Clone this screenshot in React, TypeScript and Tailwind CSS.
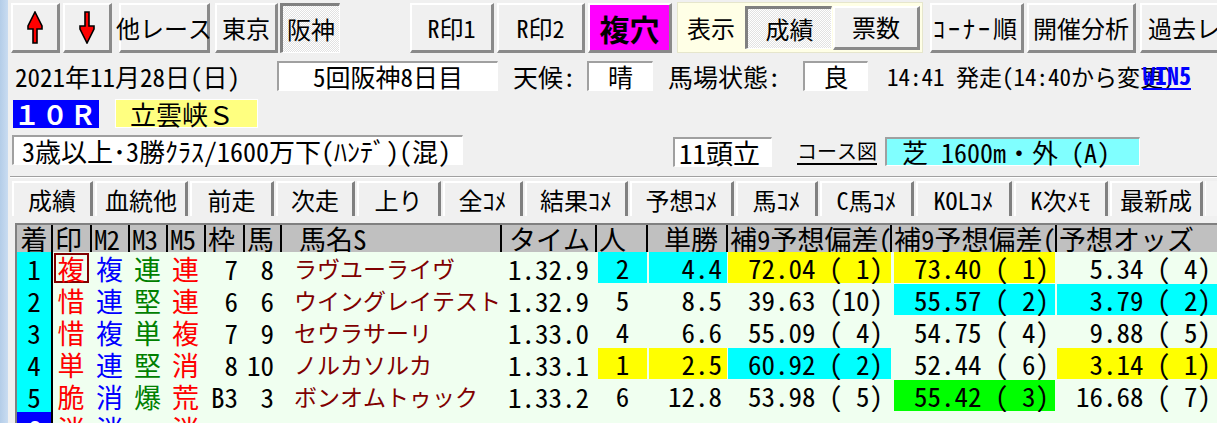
import React from 'react';

type Tone = 'cy' | 'ye' | 'gr' | undefined;

type Row = {
  rank: string;
  marks: [string, string, string, string];
  waku: string;
  uma: string;
  name: string;
  time: string;
  pop: string;
  win: string;
  a: string;
  b: string;
  odds: string;
  tones: { pop?: Tone; win?: Tone; a?: Tone; b?: Tone; odds?: Tone };
};

const rows: Row[] = [
  { rank: '1', marks: ['複', '複', '連', '連'], waku: '7', uma: '8', name: 'ラヴユーライヴ', time: '1.32.9', pop: '2', win: '4.4', a: '72.04 ( 1)', b: '73.40 ( 1)', odds: '5.34 ( 4)', tones: { pop: 'cy', win: 'cy', a: 'ye', b: 'ye' } },
  { rank: '2', marks: ['惜', '連', '堅', '連'], waku: '6', uma: '6', name: 'ウイングレイテスト', time: '1.32.9', pop: '5', win: '8.5', a: '39.63 (10)', b: '55.57 ( 2)', odds: '3.79 ( 2)', tones: { b: 'cy', odds: 'cy' } },
  { rank: '3', marks: ['惜', '複', '単', '複'], waku: '7', uma: '9', name: 'セウラサーリ', time: '1.33.0', pop: '4', win: '6.6', a: '55.09 ( 4)', b: '54.75 ( 4)', odds: '9.88 ( 5)', tones: {} },
  { rank: '4', marks: ['単', '連', '堅', '消'], waku: '8', uma: '10', name: 'ノルカソルカ', time: '1.33.1', pop: '1', win: '2.5', a: '60.92 ( 2)', b: '52.44 ( 6)', odds: '3.14 ( 1)', tones: { pop: 'ye', win: 'ye', a: 'cy', odds: 'ye' } },
  { rank: '5', marks: ['脆', '消', '爆', '荒'], waku: 'B3', uma: '3', name: 'ボンオムトゥック', time: '1.33.2', pop: '6', win: '12.8', a: '53.98 ( 5)', b: '55.42 ( 3)', odds: '16.68 ( 7)', tones: { b: 'gr' } },
  { rank: '6', marks: ['消', '消', '', '消'], waku: '', uma: '', name: '', time: '', pop: '', win: '', a: '', b: '', odds: '', tones: {} },
];

const toneBg = (t: Tone) =>
  t === 'cy' ? 'bg-[#00ffff]' : t === 'ye' ? 'bg-[#ffff00]' : t === 'gr' ? 'bg-[#00ff00]' : '';

const GRID =
  'grid grid-cols-[36px_39px_38px_38px_38px_39px_37px_220px_95px_51px_80px_164px_165px_170px]';

const markColors = ['text-[#ff0000]', 'text-[#0000ff]', 'text-[#008000]', 'text-[#ff0000]'];

function Btn({
  className = '',
  pressed = false,
  children,
}: {
  className?: string;
  pressed?: boolean;
  children: React.ReactNode;
}) {
  const face = pressed
    ? 'border-t-[3px] border-l-[3px] border-t-[#808080] border-l-[#808080] border-b border-r border-b-white border-r-white bg-[repeating-conic-gradient(#ffffff_0_25%,#e2e2e2_0_50%)] bg-[length:2px_2px]'
    : 'border-t-2 border-l-2 border-t-white border-l-white border-b-[3px] border-r-[3px] border-b-[#8a8a8a] border-r-[#8a8a8a] bg-[#f0f0f0]';
  return (
    <div className={`flex shrink-0 items-center justify-center text-[24px] leading-none ${face} ${className}`}>
      {children}
    </div>
  );
}

function Inset({ className = '', children }: { className?: string; children: React.ReactNode }) {
  return (
    <div
      className={`flex shrink-0 items-center border-t-2 border-l-2 border-[#a0a0a0] border-b border-r border-b-white border-r-white bg-white leading-none ${className}`}
    >
      {children}
    </div>
  );
}

function UpArrow() {
  return (
    <svg width="20" height="33" viewBox="0 0 20 33">
      <path d="M10 1 L17 15 L17 18 L12 18 L12 32 L8 32 L8 18 L3 18 L3 15 Z" fill="#ff0000" stroke="#000" strokeWidth="1.6" strokeLinejoin="miter" />
    </svg>
  );
}

function DownArrow() {
  return (
    <svg width="20" height="33" viewBox="0 0 20 33">
      <path d="M8 1 L12 1 L12 15 L17 15 L17 18 L10 32 L3 18 L3 15 L8 15 Z" fill="#ff0000" stroke="#000" strokeWidth="1.6" strokeLinejoin="miter" />
    </svg>
  );
}

function Tab({ className = '', children }: { className?: string; children: React.ReactNode }) {
  return (
    <div
      className={`flex h-[35px] shrink-0 items-center justify-center border-t-2 border-l-2 border-white border-r-[3px] border-r-[#808080] bg-[#f0f0f0] text-[24px] leading-none ${className}`}
    >
      {children}
    </div>
  );
}

export default function App() {
  return (
    <div className="flex h-[423px] w-[1217px] overflow-hidden bg-[#f0f0f0] text-black [font-family:'Noto_Sans_Mono_CJK_JP','Noto_Sans_CJK_JP',sans-serif] [font-feature-settings:'hwid']">
      {/* window frame edge */}
      <div className="w-[8px] shrink-0 bg-gradient-to-r from-[#b4cde8] to-[#c9dcf1]" />

      <div className="flex min-w-0 flex-1 flex-col">
        {/* toolbar */}
        <div className="mt-[3px] flex h-[50px] items-stretch whitespace-nowrap">
          <Btn className="ml-[3px] w-[49px]"><UpArrow /></Btn>
          <Btn className="ml-[3px] w-[49px]"><DownArrow /></Btn>
          <Btn className="ml-[7px] w-[91px]">他レース</Btn>
          <Btn className="ml-[5px] w-[63px]">東京</Btn>
          <Btn className="ml-[2px] w-[60px]" pressed>阪神</Btn>

          <Btn className="ml-[70px] w-[84px]">R印1</Btn>
          <Btn className="ml-[3px] w-[88px]">R印2</Btn>
          <Btn className="ml-[3px] w-[84px] !bg-[#ff00ff] text-[30px] font-bold">複穴</Btn>

          <div className="-mt-px ml-[5px] flex h-[51px] w-[246px] shrink-0 items-center border border-[#e6e6cc] bg-[#ffffe6]">
            <span className="w-[67px] pl-[9px] text-[24px] leading-none">表示</span>
            <Btn className="h-[43px] w-[87px]" pressed>成績</Btn>
            <Btn className="ml-px h-[44px] w-[87px]">票数</Btn>
          </div>

          <Btn className="ml-[7px] w-[94px] tracking-[3px]">ｺｰﾅｰ順</Btn>
          <Btn className="ml-[3px] w-[109px]">開催分析</Btn>
          <Btn className="ml-[4px] w-[100px] justify-start pl-[6px]">過去レース</Btn>
        </div>

        {/* date / venue / weather */}
        <div className="relative mt-[8px] flex h-[30px] items-center whitespace-nowrap">
          <span className="ml-[7px] w-[262px] text-[25px] leading-none">2021年11月28日(日)</span>
          <Inset className="h-[30px] w-[221px] justify-center text-[25px]">5回阪神8日目</Inset>
          <span className="w-[89px] pl-[15px] text-[25px] leading-none">天候:</span>
          <Inset className="h-[30px] w-[66px] justify-center text-[25px]">晴</Inset>
          <span className="w-[150px] pl-[15px] text-[25px] leading-none">馬場状態:</span>
          <Inset className="h-[30px] w-[65px] justify-center text-[25px]">良</Inset>
          <span className="pl-[19px] text-[23px] leading-none">14:41 発走(14:40から変更)</span>
          <span className="absolute left-[1135px] top-[2px] text-[24px] font-bold leading-none text-[#0000ff] underline underline-offset-[3px]">
            WIN5
          </span>
        </div>

        {/* race number / race name */}
        <div className="mt-[8px] flex h-[29px] items-center whitespace-nowrap">
          <div className="ml-[5px] flex h-[28px] w-[86px] items-center justify-center bg-[#0000ff] text-[26px] font-bold leading-none tracking-[2px] text-white [font-feature-settings:normal]">
            １０Ｒ
          </div>
          <div className="ml-[16px] flex h-[29px] w-[143px] items-center border border-white bg-[#ffff80] pl-[14px] text-[26px] leading-none [font-feature-settings:normal]">
            立雲峡Ｓ
          </div>
        </div>

        {/* conditions / runners / course */}
        <div className="mt-[7px] flex h-[32px] items-start whitespace-nowrap">
          <Inset className="ml-[4px] h-[30px] w-[451px] pl-[8px] text-[26px]">3歳以上･3勝ｸﾗｽ/1600万下(ﾊﾝﾃﾞ)(混)</Inset>
          <Inset className="ml-[210px] mt-[2px] h-[30px] w-[99px] pl-[4px] text-[27px]">11頭立</Inset>
          <span className="ml-[25px] mt-[6px] text-[20px] leading-none underline underline-offset-[4px] decoration-2">
            コース図
          </span>
          <div className="ml-[8px] mt-[2px] flex h-[29px] w-[255px] items-center border-t-2 border-l-2 border-[#a0a0a0] border-b border-r border-b-white border-r-white bg-[#80ffff] pl-[15px] text-[26px] leading-none">
            芝 1600m・外 (A)
          </div>
        </div>

        <div className="ml-[2px] mt-[9px] h-[2px] border-t border-b border-t-[#a0a0a0] border-b-white" />

        {/* view tabs */}
        <div className="mt-[3px] flex h-[35px] items-stretch gap-[2px] whitespace-nowrap pl-[4px]">
          <Tab className="w-[81px]">成績</Tab>
          <Tab className="w-[93px]">血統他</Tab>
          <Tab className="w-[84px]">前走</Tab>
          <Tab className="w-[79px]">次走</Tab>
          <Tab className="w-[84px]">上り</Tab>
          <Tab className="w-[80px]">全ｺﾒ</Tab>
          <Tab className="w-[103px]">結果ｺﾒ</Tab>
          <Tab className="w-[104px]">予想ｺﾒ</Tab>
          <Tab className="w-[82px]">馬ｺﾒ</Tab>
          <Tab className="w-[94px]">C馬ｺﾒ</Tab>
          <Tab className="w-[96px]">KOLｺﾒ</Tab>
          <Tab className="w-[94px]">K次ﾒﾓ</Tab>
          <Tab className="w-[93px]">最新成</Tab>
          <div className="flex-1 border-l border-white bg-[#f4f4f4]" />
        </div>

        {/* results grid */}
        <div className="ml-[7px] mt-[7px] flex flex-col overflow-hidden border-t-2 border-l-2 border-[#808080] whitespace-nowrap">
          <div className={`${GRID} h-[33px] bg-[#c0c0c0] text-[27px] leading-none`}>
            <div className="flex items-center justify-center border-r-2 border-black">着</div>
            <div className="flex items-center border-r-2 border-black pl-[2px]">印</div>
            <div className="flex items-center border-r-2 border-black pl-[2px] tracking-[-1px]">M2</div>
            <div className="flex items-center border-r-2 border-black pl-[2px] tracking-[-1px]">M3</div>
            <div className="flex items-center border-r-2 border-black pl-[2px] tracking-[-1px]">M5</div>
            <div className="flex items-center border-r-2 border-black pl-[2px]">枠</div>
            <div className="flex items-center border-r-2 border-black pl-[2px]">馬</div>
            <div className="flex items-center border-r-2 border-black pl-[17px]">馬名S</div>
            <div className="flex items-center border-r-2 border-black pl-[7px]">タイム</div>
            <div className="flex items-center border-r-2 border-black pl-[2px]">人</div>
            <div className="flex items-center justify-end border-r-2 border-black pr-[8px]">単勝</div>
            <div className="flex items-center overflow-hidden border-r-2 border-black pl-[2px]">補9予想偏差(</div>
            <div className="flex items-center overflow-hidden border-r-2 border-black pl-[2px]">補9予想偏差(</div>
            <div className="flex items-center pl-[2px]">予想オッズ</div>
          </div>

          {rows.map((r, i) => (
            <div key={i} className={`${GRID} h-[32px] shrink-0 bg-[#f0fff0] text-[27px] leading-none`}>
              <div
                className={`flex items-center justify-center border-r-2 border-black ${
                  r.rank === '6' ? 'bg-[#0000ff] text-white' : 'bg-[#00ffff]'
                }`}
              >
                {r.rank}
              </div>
              {r.marks.map((m, k) => (
                <div key={k} className={`flex items-center justify-center pr-[3px] ${markColors[k]}`}>
                  {i === 0 && k === 0 ? (
                    <span className="flex h-[30px] w-[35px] items-center justify-center border-2 border-[#800000]">{m}</span>
                  ) : (
                    m
                  )}
                </div>
              ))}
              <div className="flex items-center justify-end pr-[7px]">{r.waku}</div>
              <div className="flex items-center justify-end pr-[8px]">{r.uma}</div>
              <div className="flex items-center overflow-hidden pl-[12px] text-[23px] text-[#800000]">{r.name}</div>
              <div className="flex items-center justify-end pr-[8px]">{r.time}</div>
              <div className={`flex items-center justify-center border-x border-b border-[#f0fff0] ${toneBg(r.tones.pop)}`}>{r.pop}</div>
              <div className={`flex items-center justify-end border-x border-b border-[#f0fff0] pr-[5px] ${toneBg(r.tones.win)}`}>{r.win}</div>
              <div className={`flex items-center justify-end border-r border-b border-[#f0fff0] pr-[8px] whitespace-pre ${toneBg(r.tones.a)}`}>{r.a}</div>
              <div className={`flex items-center justify-end border-x-2 border-b border-[#f0fff0] pr-[6px] whitespace-pre ${toneBg(r.tones.b)}`}>{r.b}</div>
              <div className={`flex items-center justify-end border-b border-[#f0fff0] pr-[16px] whitespace-pre ${toneBg(r.tones.odds)}`}>{r.odds}</div>
            </div>
          ))}
        </div>
      </div>
    </div>
  );
}
